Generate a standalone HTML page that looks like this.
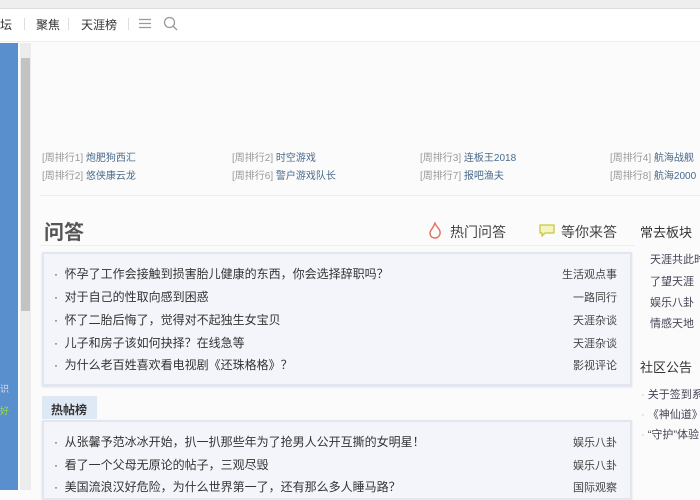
<!DOCTYPE html>
<html><head><meta charset="utf-8"><style>
*{margin:0;padding:0;box-sizing:border-box}
body{width:700px;height:490px;overflow:hidden;background:#fbfbfc;font-family:"Liberation Sans","Noto Sans CJK SC",sans-serif;position:relative;color:#333}
.a{position:absolute;white-space:nowrap}
.top{left:0;top:0;width:700px;height:9px;background:#eeeeee;border-bottom:1px solid #ddd}
.nav{left:0;top:10px;width:700px;height:32px;background:#fff;border-bottom:1px solid #eee}
.strip{left:0;top:43px;width:18px;height:447px;background:#5a8fce}
.track{left:20px;top:43px;width:11px;height:447px;background:#ececec}
.thumb{left:21px;top:58px;width:9px;height:253px;background:#c3c3c3}
.rk{font-size:10px;color:#999}.rk b{font-weight:normal;color:#4a6a8a}
.box{background:#f4f5fa;border:2px solid #e2e6ef;box-shadow:0 1px 2px #d8dce6}
.li{font-size:12px;color:#333}
.tag{font-size:11px;color:#444;text-align:right}
.rc{font-size:11px;color:#445}
.nv{font-size:12px;color:#333;top:16px}
.sep{top:18px;width:1px;height:12px;background:#ddd}
</style></head><body>
<div class="a top"></div>
<div class="a nav"></div>
<div class="a nv" style="left:0">坛</div>
<div class="a sep" style="left:24px"></div>
<div class="a nv" style="left:36px">聚焦</div>
<div class="a sep" style="left:68px"></div>
<div class="a nv" style="left:81px">天涯榜</div>
<div class="a sep" style="left:128px"></div>
<svg class="a" style="left:139px;top:18px" width="12" height="11"><path d="M0 1.5H12M0 5.5H12M0 9.5H12" stroke="#999" stroke-width="1.2"/></svg>
<svg class="a" style="left:163px;top:16px" width="15" height="15"><circle cx="6.5" cy="6.5" r="5" fill="none" stroke="#999" stroke-width="1.3"/><line x1="10" y1="10" x2="14" y2="14" stroke="#999" stroke-width="1.3"/></svg>
<div class="a strip"></div>
<div class="a track"></div>
<div class="a thumb"></div>
<div class="a" style="left:0;top:382px;font-size:9px;color:#dde">识</div>
<div class="a" style="left:0;top:404px;font-size:9px;color:#9d4">好</div>

<div class="a rk" style="left:42px;top:149px">[周排行1] <b>炮肥狗西汇</b></div>
<div class="a rk" style="left:42px;top:167px">[周排行2] <b>悠侠康云龙</b></div>
<div class="a rk" style="left:232px;top:149px">[周排行2] <b>时空游戏</b></div>
<div class="a rk" style="left:232px;top:167px">[周排行6] <b>警户游戏队长</b></div>
<div class="a rk" style="left:420px;top:149px">[周排行3] <b>连板王2018</b></div>
<div class="a rk" style="left:420px;top:167px">[周排行7] <b>报吧渔夫</b></div>
<div class="a rk" style="left:610px;top:149px">[周排行4] <b>航海战舰</b></div>
<div class="a rk" style="left:610px;top:167px">[周排行8] <b>航海2000</b></div>
<div class="a" style="left:40px;top:195px;width:660px;height:1px;background:#eee"></div>

<div class="a" style="left:44px;top:216px;font-size:20px;font-weight:bold;color:#555">问答</div>
<svg class="a" style="left:428px;top:222px" width="14" height="17"><path d="M7 1C8 5 13 7 12 12C11 15 9 16 7 16C4 16 2 14 2 11C2 8 5 7 7 1Z" fill="none" stroke="#e07060" stroke-width="1.4"/></svg>
<div class="a" style="left:450px;top:222px;font-size:14px;color:#444">热门问答</div>
<svg class="a" style="left:538px;top:223px" width="18" height="14"><path d="M2 2H16V10H7L4 13V10H2Z" fill="#f4f4c0" stroke="#c8c840" stroke-width="1.3"/></svg>
<div class="a" style="left:561px;top:222px;font-size:14px;color:#444">等你来答</div>
<div class="a" style="left:640px;top:222px;font-size:13px;color:#333">常去板块</div>
<div class="a" style="left:40px;top:245px;width:595px;height:1px;background:#eee"></div>

<div class="a box" style="left:42px;top:252px;width:590px;height:134px"></div>
<div class="a li" style="left:54px;top:265px">· &nbsp;怀孕了工作会接触到损害胎儿健康的东西，你会选择辞职吗？</div>
<div class="a li" style="left:54px;top:288px">· &nbsp;对于自己的性取向感到困惑</div>
<div class="a li" style="left:54px;top:311px">· &nbsp;怀了二胎后悔了，觉得对不起独生女宝贝</div>
<div class="a li" style="left:54px;top:334px">· &nbsp;儿子和房子该如何抉择？在线急等</div>
<div class="a li" style="left:54px;top:356px">· &nbsp;为什么老百姓喜欢看电视剧《还珠格格》？</div>
<div class="a tag" style="left:540px;width:77px;top:266px">生活观点事</div>
<div class="a tag" style="left:540px;width:77px;top:289px">一路同行</div>
<div class="a tag" style="left:540px;width:77px;top:312px">天涯杂谈</div>
<div class="a tag" style="left:540px;width:77px;top:335px">天涯杂谈</div>
<div class="a tag" style="left:540px;width:77px;top:357px">影视评论</div>

<div class="a" style="left:42px;top:396px;width:55px;height:23px;background:#dfe9f6;font-size:12px;font-weight:bold;padding:5px 0 0 9px;color:#333">热帖榜</div>
<div class="a box" style="left:42px;top:420px;width:590px;height:80px"></div>
<div class="a li" style="left:54px;top:433px">· &nbsp;从张馨予范冰冰开始，扒一扒那些年为了抢男人公开互撕的女明星！</div>
<div class="a li" style="left:54px;top:456px">· &nbsp;看了一个父母无原论的帖子，三观尽毁</div>
<div class="a li" style="left:54px;top:478px">· &nbsp;美国流浪汉好危险，为什么世界第一了，还有那么多人睡马路？</div>
<div class="a tag" style="left:540px;width:77px;top:434px">娱乐八卦</div>
<div class="a tag" style="left:540px;width:77px;top:457px">娱乐八卦</div>
<div class="a tag" style="left:540px;width:77px;top:479px">国际观察</div>

<div class="a rc" style="left:650px;top:251px">天涯共此时</div>
<div class="a rc" style="left:650px;top:273px">了望天涯</div>
<div class="a rc" style="left:650px;top:294px">娱乐八卦</div>
<div class="a rc" style="left:650px;top:315px">情感天地</div>
<div class="a" style="left:640px;top:357px;font-size:13px;color:#333">社区公告</div>
<div class="a rc" style="left:641px;top:386px"><span style="color:#bbb">·</span> 关于签到系统</div>
<div class="a rc" style="left:641px;top:406px"><span style="color:#bbb">·</span> 《神仙道》</div>
<div class="a rc" style="left:641px;top:426px"><span style="color:#bbb">·</span> “守护”体验</div>
</body></html>
